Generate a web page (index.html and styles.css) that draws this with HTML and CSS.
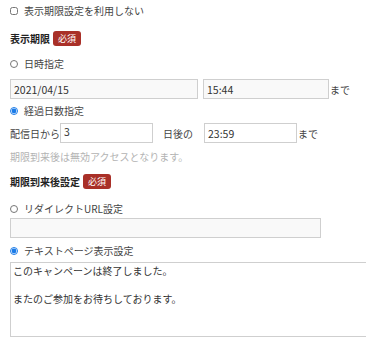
FILE: index.html
```html
<!DOCTYPE html>
<html lang="ja">
<head>
  <meta charset="UTF-8" />
  <meta name="viewport" content="width=device-width, initial-scale=1.0"/>
  <title>表示期限設定</title>
  <link rel="stylesheet" href="styles.css">
</head>
<body>
  <div class="form">
    <label class="choice first">
      <input type="checkbox" />
      <span>表示期限設定を利用しない</span>
    </label>

    <div class="section-title">表示期限<span class="badge">必須</span></div>

    <label class="choice radio-date">
      <input type="radio" name="limit" />
      <span>日時指定</span>
    </label>
    <div class="field-row row-date">
      <input type="text" class="text-input date-input" value="2021/04/15" />
      <input type="text" class="text-input time-input" value="15:44" />
      <span class="suffix">まで</span>
    </div>

    <label class="choice radio-days">
      <input type="radio" name="limit" checked />
      <span>経過日数指定</span>
    </label>
    <div class="field-row row-days">
      <span>配信日から</span>
      <input type="text" class="text-input days-input" value="3" />
      <span class="days-after">日後の</span>
      <input type="text" class="text-input days-time" value="23:59" />
      <span class="suffix">まで</span>
    </div>
    <p class="hint">期限到来後は無効アクセスとなります。</p>

    <div class="section-title second">期限到来後設定<span class="badge">必須</span></div>

    <label class="choice radio-url">
      <input type="radio" name="after" />
      <span>リダイレクトURL設定</span>
    </label>
    <input type="text" class="text-input url-input" value="" />

    <label class="choice radio-text">
      <input type="radio" name="after" checked />
      <span>テキストページ表示設定</span>
    </label>
    <div class="message-box">
      <textarea class="message">このキャンペーンは終了しました。

またのご参加をお待ちしております。</textarea>
    </div>
  </div>
</body>
</html>
```

FILE: styles.css
```css
body {
  margin: 0;
  padding: 0 0 0 10px;
  font-family: "Noto Sans CJK JP", "Noto Sans", sans-serif;
  font-size: 10px;
  color: #444;
  background: #fff;
  overflow: hidden;
}

.form {
  display: flex;
  flex-direction: column;
  align-items: flex-start;
}

.choice {
  display: flex;
  align-items: center;
  height: 16px;
  line-height: 16px;
}

.choice input {
  width: 8px;
  height: 8px;
  margin: 0 6px 0 0;
  accent-color: #1a7be8;
}

.first {
  height: 22px;
}

.section-title {
  display: flex;
  align-items: center;
  height: 15px;
  margin-top: 9px;
  font-weight: bold;
  color: #222;
}

.section-title.second {
  margin-top: 10px;
}

.badge {
  margin-left: 3px;
  padding: 0 5px;
  height: 15px;
  line-height: 15px;
  font-size: 9px;
  font-weight: normal;
  color: #fff;
  background: #a93028;
  border-radius: 3px;
}

.radio-date { margin-top: 10px; }
.radio-days { margin-top: 4px; }
.radio-url { margin-top: 13px; height: 14px; }
.radio-text { margin-top: 5px; }

.field-row {
  display: flex;
  align-items: center;
  height: 20px;
}

.row-date { margin-top: 7px; }
.row-days { margin-top: 4px; }

.text-input {
  box-sizing: border-box;
  height: 20px;
  padding: 0 3px;
  border: 1px solid #cfcfcf;
  background: #f9f9f9;
  font-family: inherit;
  font-size: 10.5px;
  color: #333;
  outline: none;
}

.date-input { width: 188px; }
.time-input { width: 126px; margin-left: 5px; }
.days-input { width: 93px; padding-bottom: 4px; background: #fff; }
.days-after { margin-left: 10px; }
.days-time { width: 93px; margin-left: 11px; background: #fff; }

.suffix {
  margin-left: 1px;
}

.hint {
  margin: 7px 0 0;
  height: 14px;
  line-height: 14px;
  color: #b3b3b3;
}

.url-input {
  width: 311px;
  margin-top: 2px;
}

.message-box {
  width: 356px;
  margin-top: 3px;
  overflow: hidden;
}

.message {
  display: block;
  box-sizing: border-box;
  width: 380px;
  height: 75px;
  margin: 0;
  padding: 1px 2px;
  border: 1px solid #cfcfcf;
  font-family: inherit;
  font-size: 10px;
  line-height: 14px;
  color: #333;
  resize: none;
}
```
